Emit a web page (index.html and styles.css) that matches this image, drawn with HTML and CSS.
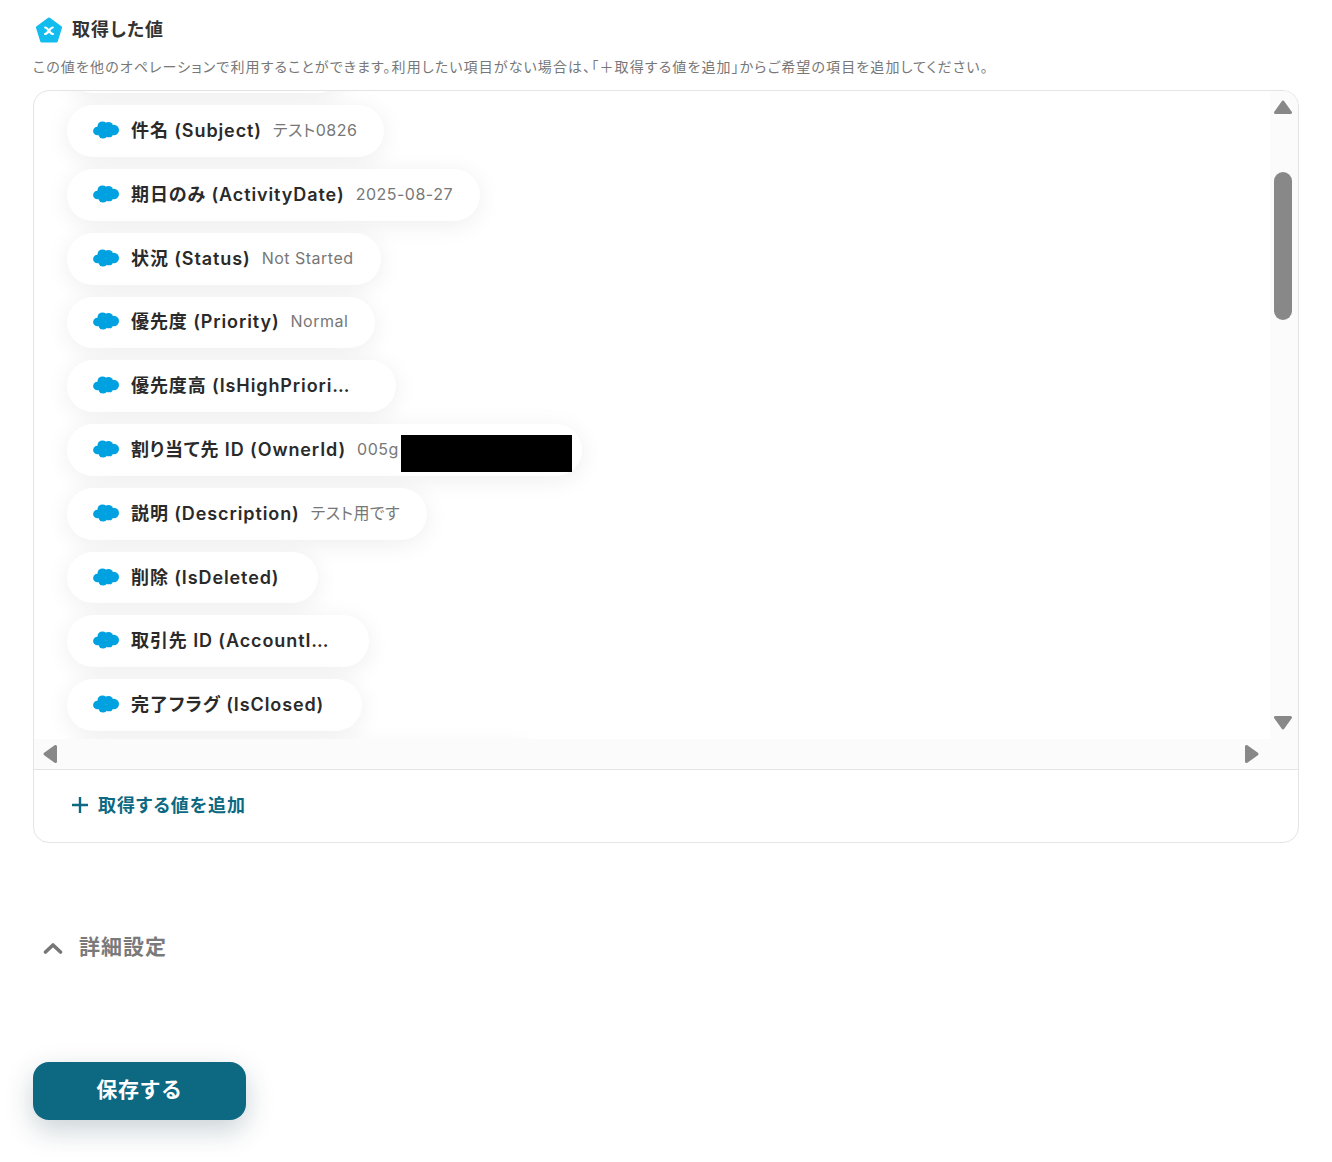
FILE: index.html
```html
<!DOCTYPE html>
<html lang="ja">
<head>
<meta charset="utf-8">
<title>取得した値</title>
<link rel="stylesheet" href="styles.css">
</head>
<body>
<svg class="defs" width="0" height="0" aria-hidden="true">
  <symbol id="sf" viewBox="0 0 26 18">
    <g fill="#00a1e0">
      <circle cx="4.400" cy="10" r="4.300"/>
      <circle cx="9.500" cy="5.400" r="5"/>
      <circle cx="15.500" cy="5.600" r="4.600"/>
      <circle cx="20.800" cy="9" r="5.200"/>
      <circle cx="16" cy="12.400" r="3.900"/>
      <circle cx="10" cy="13" r="4.600"/>
    </g>
  </symbol>
</svg>

<main class="page">
  <h2 class="title">
    <svg class="logo" viewBox="0 0 26 26" aria-hidden="true">
      <path fill="#12bcee" stroke="#12bcee" stroke-width="3" stroke-linejoin="round" d="M13 2 24.500 10.500 20.300 24H5.700L1.500 10.500z"/>
      <path fill="none" stroke="#fff" stroke-width="2.200" stroke-linecap="round" d="M9.200 10.500c3 0 4.400 6.500 7.800 6.500M16.800 10.500c-3.200 0-4.600 6.500-7.800 6.500"/>
    </svg>
    <span>取得した値</span>
  </h2>
  <p class="desc">この値を他のオペレーションで利用することができます。利用したい項目がない場合は、「＋取得する値を追加」からご希望の項目を追加してください。</p>

  <section class="box">
    <div class="scroller">
      <div class="viewport">
        <ul class="list">
          <li class="pill pill-clip-top"></li>
          <li class="pill"><svg class="sf"><use href="#sf"/></svg><span class="label">件名 (Subject)</span><span class="value">テスト0826</span></li>
          <li class="pill"><svg class="sf"><use href="#sf"/></svg><span class="label">期日のみ (ActivityDate)</span><span class="value">2025-08-27</span></li>
          <li class="pill"><svg class="sf"><use href="#sf"/></svg><span class="label">状況 (Status)</span><span class="value">Not Started</span></li>
          <li class="pill"><svg class="sf"><use href="#sf"/></svg><span class="label">優先度 (Priority)</span><span class="value">Normal</span></li>
          <li class="pill pill-trunc-lg"><svg class="sf"><use href="#sf"/></svg><span class="label">優先度高 (IsHighPriori…</span><span class="value"></span></li>
          <li class="pill"><svg class="sf"><use href="#sf"/></svg><span class="label">割り当て先 ID (OwnerId)</span><span class="value">005g</span><span class="redact"></span></li>
          <li class="pill"><svg class="sf"><use href="#sf"/></svg><span class="label">説明 (Description)</span><span class="value">テスト用です</span></li>
          <li class="pill"><svg class="sf"><use href="#sf"/></svg><span class="label">削除 (IsDeleted)</span><span class="value"></span></li>
          <li class="pill pill-trunc-sm"><svg class="sf"><use href="#sf"/></svg><span class="label">取引先 ID (AccountI…</span><span class="value"></span></li>
          <li class="pill"><svg class="sf"><use href="#sf"/></svg><span class="label">完了フラグ (IsClosed)</span><span class="value"></span></li>
          <li class="pill pill-clip-bottom"></li>
        </ul>
      </div>
      <div class="vbar">
        <svg class="arrow" viewBox="0 0 18 14"><path d="M9 2 16.500 12.500H1.500z"/></svg>
        <div class="thumb"></div>
        <svg class="arrow" viewBox="0 0 18 14"><path d="M1.500 1.500H16.500L9 12z"/></svg>
      </div>
      <div class="hbar">
        <svg class="arrow-h" viewBox="0 0 14 18"><path d="M12.500 1.500V16.500L2 9z"/></svg>
        <svg class="arrow-h" viewBox="0 0 14 18"><path d="M1.500 1.500V16.500L12 9z"/></svg>
      </div>
    </div>
    <div class="foot">
      <a class="add">
        <svg class="plus" viewBox="0 0 18 18"><path d="M9 1v16M1 9h16"/></svg>
        <span>取得する値を追加</span>
      </a>
    </div>
  </section>

  <div class="advanced">
    <svg class="chev" viewBox="0 0 20 12"><path d="M2.500 10 10 3l7.500 7"/></svg>
    <span>詳細設定</span>
  </div>

  <button class="save"><span>保存する</span></button>
</main>
</body>
</html>
```

FILE: styles.css
```css
* { box-sizing: border-box; }
html, body { margin: 0; padding: 0; background: #fff; }
body {
  font-family: "Inter", "Noto Sans CJK JP", "Noto Sans", sans-serif;
  font-feature-settings: "palt";
  color: #2a2a2a;
}
.defs { position: absolute; }
.page { padding: 17px 33px 42px; }

.title {
  display: flex;
  align-items: center;
  gap: 10px;
  height: 26px;
  margin: 0 0 0 3px;
  font-size: 18px;
  font-weight: 600;
  letter-spacing: 1px;
  line-height: 22px;
  color: #333;
}
.logo { width: 26px; height: 26px; flex: none; }
.desc {
  margin: 15px 0 0;
  font-size: 14px;
  line-height: 18px;
  color: #777;
  letter-spacing: 1.12px;
  white-space: nowrap;
}

.box {
  margin-top: 14px;
  height: 753px;
  border: 1px solid #e4e4e4;
  border-radius: 16px;
  overflow: hidden;
  display: flex;
  flex-direction: column;
}
.scroller {
  height: 679px;
  flex: none;
  display: grid;
  grid-template-columns: 1fr 28px;
  grid-template-rows: 648px 30px;
  border-bottom: 1px solid #e4e4e4;
}
.viewport { overflow: hidden; }
.list {
  list-style: none;
  margin: -49.7px 0 0;
  padding: 0 0 0 33px;
  display: flex;
  flex-direction: column;
  align-items: flex-start;
  gap: 12px;
}
.pill {
  height: 51.8px;
  flex: none;
  display: inline-flex;
  align-items: center;
  gap: 11px;
  padding: 0 27px 0 26px;
  background: #fff;
  border-radius: 26px;
  box-shadow: 0 4px 24px rgba(0, 0, 0, 0.07);
}
.pill-trunc-lg { padding-right: 35px; }
.pill-trunc-sm { padding-right: 29px; }
.pill-clip-top { width: 278px; }
.pill-clip-bottom { width: 470px; }
.sf { width: 26px; height: 18px; flex: none; margin: 0 1px 2px 0; }
.label {
  font-size: 18px;
  font-weight: 600;
  letter-spacing: 0.9px;
  line-height: 24px;
  color: #2a2a2a;
  white-space: nowrap;
}
.value {
  font-size: 16px;
  letter-spacing: 0.5px;
  line-height: 24px;
  padding-bottom: 2px;
  color: #777;
  white-space: nowrap;
}
.value:empty { width: 0; }
.redact {
  width: 171px;
  height: 37px;
  background: #000;
  margin: 7px -17px 0 -9px;
  flex: none;
}

.vbar {
  grid-row: 1;
  grid-column: 2;
  background: #fbfbfb;
  display: flex;
  flex-direction: column;
  align-items: center;
  padding: 9px 6px 9px 3px;
}
.arrow { width: 18px; height: 14px; flex: none; }
.arrow path, .arrow-h path {
  fill: #888;
  stroke: #888;
  stroke-width: 3;
  stroke-linejoin: round;
}
.thumb {
  width: 18px;
  height: 148px;
  flex: none;
  margin: 58px 0 auto;
  background: #888;
  border-radius: 9px;
}
.hbar {
  grid-row: 2;
  grid-column: 1 / 3;
  background: #fbfbfb;
  display: flex;
  align-items: center;
  justify-content: space-between;
  padding: 0 39px 0 9px;
}
.arrow-h { width: 14px; height: 18px; flex: none; }

.foot {
  flex: 1;
  display: flex;
  align-items: center;
  padding: 0 0 2px 37px;
}
.add {
  display: flex;
  align-items: center;
  gap: 9px;
  font-size: 18px;
  font-weight: 600;
  letter-spacing: 1px;
  line-height: 24px;
  color: #0d6982;
}
.add span { padding-top: 2px; }
.plus { width: 18px; height: 18px; flex: none; }
.plus path { fill: none; stroke: #0d6982; stroke-width: 2.400; }

.advanced {
  margin: 90px 0 0 10px;
  height: 30px;
  display: flex;
  align-items: center;
  gap: 16px;
  font-size: 21px;
  font-weight: 600;
  letter-spacing: 1px;
  line-height: 26px;
  color: #7a7a7a;
}
.advanced span { padding-bottom: 2px; }
.chev { width: 20px; height: 12px; flex: none; }
.chev path { fill: none; stroke: #777; stroke-width: 3.600; stroke-linecap: round; stroke-linejoin: round; }

.save {
  display: block;
  margin-top: 99px;
  width: 213px;
  height: 58px;
  border: 0;
  border-radius: 16px;
  background: #0d6982;
  color: #fff;
  font-family: inherit;
  font-size: 21px;
  font-weight: 700;
  letter-spacing: 0.6px;
  line-height: 26px;
  box-shadow: 0 10px 28px rgba(13, 50, 70, 0.22);
}
.save span { display: block; padding-bottom: 3px; }
```
